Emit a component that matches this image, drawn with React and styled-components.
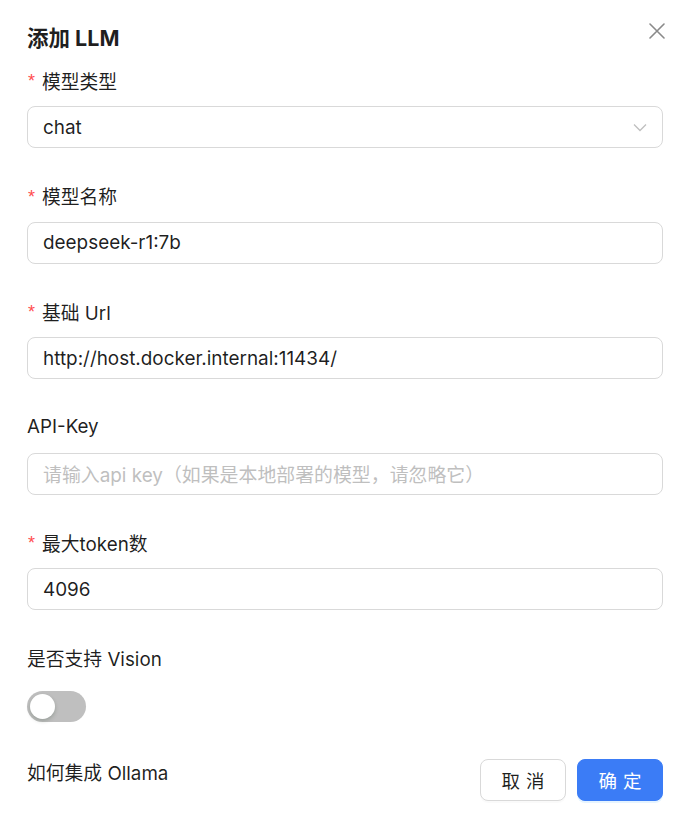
import React from "react";
import styled, { createGlobalStyle } from "styled-components";

const Global = createGlobalStyle`
  html, body { margin: 0; padding: 0; background: #ffffff; }
  body {
    font-family: "Inter", "Noto Sans CJK SC", "Noto Sans", sans-serif;
    color: rgba(0,0,0,0.88);
    -webkit-font-smoothing: antialiased;
  }
  * { box-sizing: border-box; }
`;

const Dialog = styled.div`
  width: 690px;
  height: 824px;
  padding: 20px 27px 0 27px;
  display: flex;
  flex-direction: column;
  background: #fff;
`;

const Header = styled.div`
  display: flex;
  justify-content: space-between;
  align-items: flex-start;
  height: 36px;
  margin-bottom: 10px;
`;

const Title = styled.h1`
  margin: 0;
  font-size: 21.5px;
  font-weight: 700;
  line-height: 36px;
  color: rgba(0,0,0,0.88);
`;

const CloseBtn = styled.button`
  border: none;
  background: transparent;
  padding: 0;
  width: 22px;
  height: 22px;
  margin-top: 0px;
  margin-right: -5px;
  display: flex;
  align-items: center;
  justify-content: center;
  color: #8a8a8a;
  cursor: pointer;
`;

const Field = styled.div`
  display: flex;
  flex-direction: column;
  margin-bottom: ${(p) => p.$mb || "33.6px"};
`;

const Label = styled.label`
  display: flex;
  align-items: center;
  height: 28px;
  margin-bottom: 12px;
  font-size: 18.8px;
  color: rgba(0,0,0,0.88);
`;

const Required = styled.span`
  color: #ff4d4f;
  font-size: 18px;
  margin-right: 7px;
  margin-left: 1px;
  font-family: "Liberation Sans", sans-serif;
  line-height: 1;
  position: relative;
  top: 1px;
`;

const Box = styled.div`
  height: 42px;
  border: 1px solid #d9d9d9;
  border-radius: 8px;
  display: flex;
  align-items: center;
  padding: 0 15px;
  font-size: 18.9px;
  color: ${(p) => (p.$placeholder ? "#bfbfbf" : "rgba(0,0,0,0.88)")};
  background: #fff;
`;

const BoxText = styled.span`
  flex: 1;
  white-space: nowrap;
`;

const ControlRow = styled.div`
  height: 42px;
  display: flex;
  align-items: center;
  padding-top: 4px;
`;

const Switch = styled.div`
  width: 59px;
  height: 31px;
  border-radius: 16px;
  background: #bfbfbf;
  display: flex;
  align-items: center;
  padding: 0 3px;
`;

const Knob = styled.div`
  width: 25px;
  height: 25px;
  border-radius: 50%;
  background: #fff;
  box-shadow: 0 2px 4px rgba(0, 35, 11, 0.2);
`;

const Footer = styled.div`
  display: flex;
  justify-content: space-between;
  align-items: flex-start;
`;

const HelpText = styled.span`
  font-size: 18.8px;
  line-height: 30px;
  color: rgba(0,0,0,0.88);
`;

const Buttons = styled.div`
  display: flex;
  gap: 11px;
`;

const Button = styled.button`
  width: 86px;
  height: 42px;
  border-radius: 8px;
  font-family: inherit;
  font-size: 18.5px;
  letter-spacing: 6px;
  padding: 0 0 0 6px;
  cursor: pointer;
  border: 1px solid ${(p) => (p.$primary ? "#3b7cf6" : "#d9d9d9")};
  background: ${(p) => (p.$primary ? "#3b7cf6" : "#fff")};
  color: ${(p) => (p.$primary ? "#fff" : "rgba(0,0,0,0.88)")};
  box-shadow: ${(p) =>
    p.$primary ? "0 2px 0 rgba(5, 145, 255, 0.1)" : "0 2px 0 rgba(0, 0, 0, 0.02)"};
`;

const fields = [
  { label: "模型类型", value: "chat", required: true, select: true },
  { label: "模型名称", value: "deepseek-r1:7b", required: true },
  { label: "基础 Url", value: "http://host.docker.internal:11434/", required: true },
  { label: "API-Key", value: "请输入api key（如果是本地部署的模型，请忽略它）", placeholder: true },
  { label: "最大token数", value: "4096", required: true },
];

export default function App() {
  return (
    <>
      <Global />
      <Dialog>
        <Header>
          <Title>添加 LLM</Title>
          <CloseBtn aria-label="close">
            <svg width="16" height="16" viewBox="0 0 16 16">
              <path d="M1 1 L15 15 M15 1 L1 15" stroke="currentColor" strokeWidth="1.6" strokeLinecap="round" />
            </svg>
          </CloseBtn>
        </Header>
        {fields.map((f) => (
          <Field key={f.label}>
            <Label>
              {f.required && <Required>*</Required>}
              {f.label}
            </Label>
            <Box $placeholder={f.placeholder}>
              <BoxText>{f.value}</BoxText>
              {f.select && (
                <svg width="14" height="9" viewBox="0 0 14 9">
                  <path d="M1 1.5 L7 7.5 L13 1.5" fill="none" stroke="#bfbfbf" strokeWidth="1.3" />
                </svg>
              )}
            </Box>
          </Field>
        ))}
        <Field $mb="33.5px">
          <Label>是否支持 Vision</Label>
          <ControlRow>
            <Switch>
              <Knob />
            </Switch>
          </ControlRow>
        </Field>
        <Footer>
          <HelpText>如何集成 Ollama</HelpText>
          <Buttons>
            <Button>取消</Button>
            <Button $primary>确定</Button>
          </Buttons>
        </Footer>
      </Dialog>
    </>
  );
}
